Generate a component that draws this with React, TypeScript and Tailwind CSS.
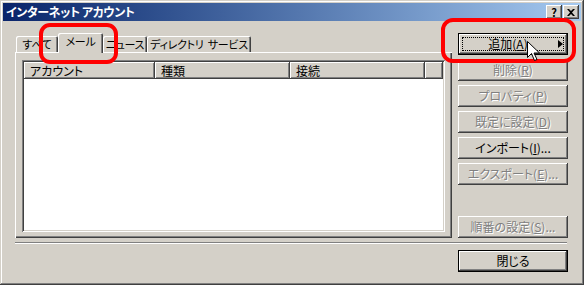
import React from "react";

const raised =
  "shadow-[inset_-1px_-1px_0_#404040,inset_1px_1px_0_#ffffff,inset_-2px_-2px_0_#808080,inset_2px_2px_0_#d4d0c8]";
const sunken =
  "shadow-[inset_1px_1px_0_#808080,inset_-1px_-1px_0_#ffffff,inset_2px_2px_0_#404040,inset_-2px_-2px_0_#d4d0c8]";

const Key: React.FC<{ k: string }> = ({ k }) => <span className="underline underline-offset-1">{k}</span>;

const Btn: React.FC<{ label: string; k: string; tail?: string; disabled?: boolean; className?: string }> = ({
  label,
  k,
  tail = "",
  disabled,
  className = "",
}) => (
  <div
    className={`h-[22px] w-[110px] bg-[#d4d0c8] ${raised} flex items-center justify-center text-[12px] leading-none whitespace-nowrap ${
      disabled ? "text-[#808080] [text-shadow:1px_1px_0_#ffffff]" : "text-black"
    } ${className}`}
  >
    {label}(<Key k={k} />){tail}
  </div>
);

const Tab: React.FC<{ label: string; w: string; active?: boolean }> = ({ label, w, active }) => (
  <div
    className={`${w} ${
      active ? "h-[20px] -mb-[1px] z-10 pb-[3px]" : "h-[16px]"
    } relative shrink-0 whitespace-pre bg-[#d4d0c8] rounded-t-[2px] shadow-[inset_1px_1px_0_#ffffff,inset_-1px_0_0_#404040,inset_-2px_0_0_#808080] flex items-center justify-center text-[11px] tracking-[-0.3px] leading-none text-black`}
  >
    {label}
  </div>
);

const App: React.FC = () => {
  return (
    <div
      className={`relative w-[584px] h-[285px] bg-[#d4d0c8] p-[3px] flex flex-col overflow-hidden font-['Noto_Sans_CJK_JP',sans-serif] [font-feature-settings:'palt'] shadow-[inset_-1px_-1px_0_#404040,inset_1px_1px_0_#d4d0c8,inset_-2px_-2px_0_#808080,inset_2px_2px_0_#ffffff]`}
    >
      {/* title bar */}
      <div className="h-[18px] bg-linear-to-r from-[#0a246a] to-[#a6caf0] flex items-center pl-[3px] pr-[2px]">
        <span className="text-white font-bold text-[12px] leading-none tracking-[-0.4px]">インターネット アカウント</span>
        <div className="ml-auto flex gap-[1px]">
          <div className={`w-[16px] h-[14px] bg-[#d4d0c8] ${raised} flex items-center justify-center text-[11px] font-bold leading-none text-black`}>
            ?
          </div>
          <div className={`w-[16px] h-[14px] bg-[#d4d0c8] ${raised} flex items-center justify-center`}>
            <svg width="8" height="7" viewBox="0 0 8 7">
              <path d="M0 0h2l2 2 2-2h2L5 3.5 8 7H6L4 5 2 7H0l3-3.5z" fill="#000" />
            </svg>
          </div>
        </div>
      </div>

      {/* body */}
      <div className="flex flex-col">
        <div className="flex pl-[12px] pt-[12px] gap-[6px]">
          <div className="w-[437px] flex flex-col">
            <div className="h-[19px] flex items-end pl-[1px]">
              <Tab label="すべて" w="w-[42px]" />
              <Tab label="メール" w="w-[45px]" active />
              <Tab label="ニュース" w="w-[44px]" />
              <Tab label="ディレクトリ  サービス" w="w-[104px]" />
            </div>
            <div className={`h-[186px] bg-[#d4d0c8] shadow-[inset_1px_1px_0_#ffffff,inset_-1px_-1px_0_#404040,inset_-2px_-2px_0_#808080] pt-[8px] pl-[7px]`}>
              <div className={`w-[423px] h-[172px] bg-white p-[2px] ${sunken}`}>
                <div className="h-[17px] flex text-[12px] leading-[17px] text-black">
                  {[
                    ["アカウント", "w-[131px]"],
                    ["種類", "w-[135px]"],
                    ["接続", "w-[135px]"],
                    ["", "flex-1"],
                  ].map(([t, w], i) => (
                    <div
                      key={i}
                      className={`${w} h-full bg-[#d4d0c8] pl-[6px] shadow-[inset_-1px_-1px_0_#404040,inset_1px_1px_0_#ffffff,inset_-2px_-2px_0_#808080]`}
                    >
                      {t}
                    </div>
                  ))}
                </div>
              </div>
            </div>
          </div>

          <div className="w-[110px] h-[205px] flex flex-col gap-[4px]">
            <div className="relative h-[22px] w-[110px] border border-black">
              <div className={`h-full w-full bg-[#d4d0c8] ${raised} flex items-center justify-center text-[12px] leading-none text-black pr-[10px]`}>
                追加(<Key k="A" />)
              </div>
              <div className="absolute inset-[3px] border border-dotted border-black" />
              <svg className="absolute right-[4px] top-[6px]" width="5" height="8" viewBox="0 0 5 8">
                <path d="M0 0l5 4-5 4z" fill="#000" />
              </svg>
            </div>
            <Btn label="削除" k="R" disabled />
            <Btn label="プロパティ" k="P" disabled />
            <Btn label="既定に設定" k="D" disabled />
            <Btn label="インポート" k="I" tail="..." />
            <Btn label="エクスポート" k="E" tail="..." disabled />
            <Btn label="順番の設定" k="S" tail="..." disabled className="mt-auto" />
          </div>
        </div>

        <div className="ml-[12px] mt-[4px] w-[552px] h-[2px] border-t border-[#808080] border-b border-b-white" />

        <div className="ml-[455px] mt-[6px] h-[22px] w-[110px] border border-black">
          <div className={`h-full w-full bg-[#d4d0c8] ${raised} flex items-center justify-center text-[12px] leading-none text-black`}>
            閉じる
          </div>
        </div>
      </div>

      {/* highlights */}
      <div className="absolute left-[39px] top-[23px] w-[79px] h-[41px] border-[4px] border-[#ff0000] rounded-[11px] pointer-events-none" />
      <div className="absolute left-[441px] top-[18px] w-[135px] h-[45px] border-[4px] border-[#ff0000] rounded-[12px] pointer-events-none" />

      {/* cursor */}
      <svg className="absolute left-[527px] top-[41px]" width="13" height="21" viewBox="0 0 13 21">
        <path d="M0.5 0.5v16l4-4 3 7 2.5-1-3-6.5h5.5z" fill="#fff" stroke="#000" strokeWidth="1" />
      </svg>
    </div>
  );
};

export default App;
